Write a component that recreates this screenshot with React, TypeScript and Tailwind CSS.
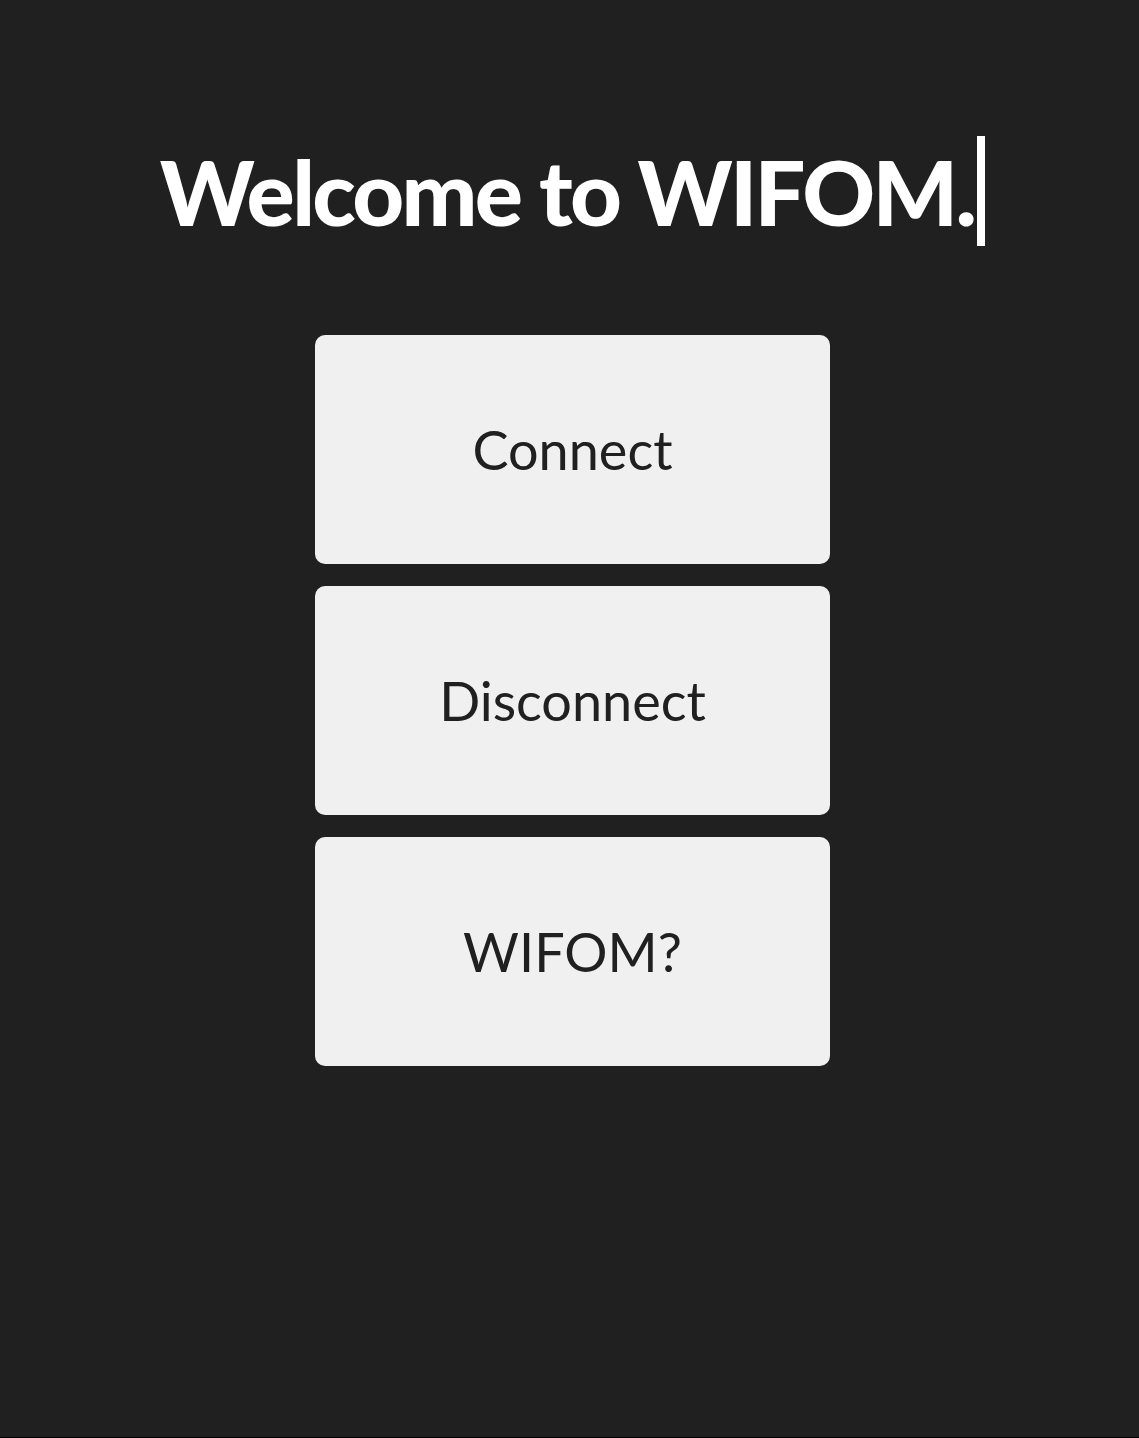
export default function App() {
  const buttons = ["Connect", "Disconnect", "WIFOM?"];
  return (
    <div className="w-full h-[1438px] bg-[#202020] flex flex-col items-center pl-[6px] border-b border-black" style={{ fontFamily: "Lato, 'Open Sans', sans-serif" }}>
      <div className="mt-[136px] h-[110px] flex items-center">
        <h1 className="text-white font-black text-[90px] leading-none tracking-[-0.03em]">Welcome to WIFOM.</h1>
        <span className="ml-[3px] w-[8px] h-[110px] bg-white" />
      </div>
      <div className="mt-[89px] flex flex-col gap-[22px]">
        {buttons.map((b) => (
          <button key={b} className="w-[515px] h-[229px] rounded-[10px] bg-[#f0f0f0] text-[#202020] text-[54px] leading-none flex items-center justify-center">
            {b}
          </button>
        ))}
      </div>
    </div>
  );
}
